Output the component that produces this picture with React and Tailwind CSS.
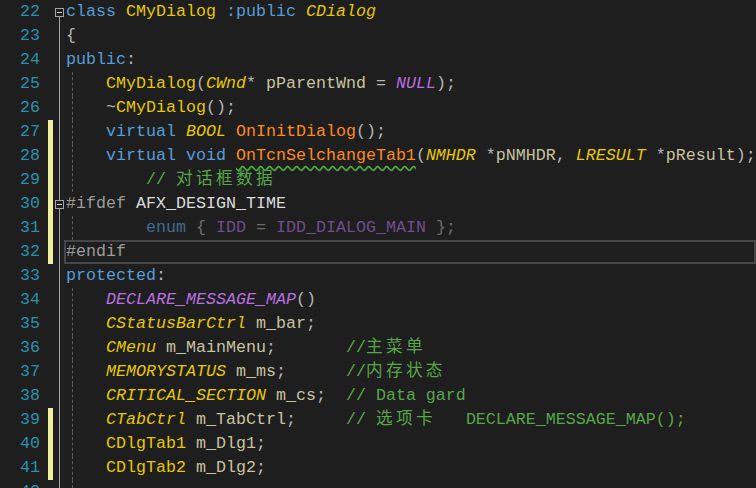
import React from 'react';

const K = 'text-[#569cd6]';
const T = 'text-[#e8c800] italic';
const C = 'text-[#e8c800]';
const F = 'text-[#ff8a1c]';
const M = 'text-[#b86fe0] italic';
const I = 'text-[#c8c3a0]';
const P = 'text-[#b4b4b4]';
const G = 'text-[#57a64a]';
const PP = 'text-[#9b9b9b]';
const W = 'text-[#dcdcdc]';
const SQ = 'text-[#ff8a1c] underline decoration-wavy decoration-[#4caa3c] underline-offset-[5px]';
const CJK = 'tracking-[3.33px]';

const lines = [
  { n: 22, box: 'first', code: [[K, 'class '], [C, 'CMyDialog '], [K, ':public '], [T, 'CDialog']] },
  { n: 23, code: [[P, '{']] },
  { n: 24, code: [[K, 'public'], [P, ':']] },
  { n: 25, guide: true, code: [[C, 'CMyDialog'], [P, '('], [T, 'CWnd'], [P, '* '], [I, 'pParentWnd '], [P, '= '], [M, 'NULL'], [P, ');']] },
  { n: 26, guide: true, code: [[P, '~'], [C, 'CMyDialog'], [P, '();']] },
  { n: 27, guide: true, mark: true, code: [[K, 'virtual '], [T, 'BOOL '], [F, 'OnInitDialog'], [P, '();']] },
  { n: 28, guide: true, mark: true, code: [[K, 'virtual void '], [SQ, 'OnTcnSelchangeTab1'], [P, '('], [T, 'NMHDR '], [P, '*'], [I, 'pNMHDR'], [P, ', '], [T, 'LRESULT '], [P, '*'], [I, 'pResult'], [P, ');']] },
  { n: 29, guide: true, extra: true, mark: true, code: [[G, '// '], [G + ' ' + CJK, '对话框数据']] },
  { n: 30, box: 'mid', mark: true, code: [[PP, '#ifdef '], [W, 'AFX_DESIGN_TIME']] },
  { n: 31, guide: true, extra: true, mark: true, code: [['text-[#3f6c92]', 'enum '], ['text-[#6c6c6c]', '{ '], ['text-[#6e4f8c]', 'IDD '], ['text-[#6c6c6c]', '= '], ['text-[#6e4f8c]', 'IDD_DIALOG_MAIN '], ['text-[#6c6c6c]', '};']] },
  { n: 32, current: true, mark: true, code: [[PP, '#endif']] },
  { n: 33, code: [[K, 'protected'], [P, ':']] },
  { n: 34, guide: true, code: [[M, 'DECLARE_MESSAGE_MAP'], [P, '()']] },
  { n: 35, guide: true, code: [[T, 'CStatusBarCtrl '], [I, 'm_bar'], [P, ';']] },
  { n: 36, guide: true, code: [[T, 'CMenu '], [I, 'm_MainMenu'], [P, ';       '], [G, '//'], [G + ' ' + CJK, '主菜单']] },
  { n: 37, guide: true, code: [[T, 'MEMORYSTATUS '], [I, 'm_ms'], [P, ';      '], [G, '//'], [G + ' ' + CJK, '内存状态']] },
  { n: 38, guide: true, code: [[T, 'CRITICAL_SECTION '], [I, 'm_cs'], [P, ';  '], [G, '// Data gard']] },
  { n: 39, guide: true, mark: true, code: [[T, 'CTabCtrl '], [I, 'm_TabCtrl'], [P, ';     '], [G, '// '], [G + ' ' + CJK, '选项卡'], [G, '   DECLARE_MESSAGE_MAP();']] },
  { n: 40, guide: true, mark: true, code: [[C, 'CDlgTab1 '], [I, 'm_Dlg1'], [P, ';']] },
  { n: 41, guide: true, mark: true, code: [[C, 'CDlgTab2 '], [I, 'm_Dlg2'], [P, ';']] },
  { n: 42, guide: true, code: [] },
];

function Outline({ box }) {
  if (!box) {
    return (
      <div className="w-[13px] shrink-0 h-full flex justify-center">
        <div className="w-px h-full bg-[#a5a5a5]" />
      </div>
    );
  }
  return (
    <div className="w-[13px] shrink-0 h-full flex flex-col items-center">
      <div className={`w-px h-[8px] ${box === 'mid' ? 'bg-[#a5a5a5]' : ''}`} />
      <div className="w-[9px] h-[9px] border border-[#a5a5a5] flex items-center justify-center shrink-0">
        <div className="w-[5px] h-px bg-[#d0d0d0]" />
      </div>
      <div className="w-px flex-1 bg-[#a5a5a5]" />
    </div>
  );
}

function Line({ line }) {
  return (
    <div className="flex h-[24px] leading-[24px]">
      <div className="w-[40px] shrink-0 text-right text-[#2b91af]">{line.n}</div>
      <div className="w-[8px] shrink-0" />
      <div className={`w-[5px] shrink-0 h-full ${line.mark ? 'bg-[#efef9f]' : ''}`} />
      <Outline box={line.box} />
      <div
        className={`flex-1 flex h-full whitespace-pre ${
          line.current ? 'border-2 border-[#464646] -ml-[2px] leading-[20px]' : ''
        }`}
      >
        {line.guide && (
          <div className="w-[40px] h-full shrink-0 pl-[6px]">
            <div className="h-full border-l border-dashed border-[#5c5c5c]" />
          </div>
        )}
        {line.extra && <span>{'    '}</span>}
        {line.code.map(([cls, text], i) => (
          <span key={i} className={cls}>
            {text}
          </span>
        ))}
      </div>
    </div>
  );
}

export default function App() {
  return (
    <div
      className="w-[756px] h-[488px] overflow-hidden bg-[#1e1e1e] text-[16.667px] text-[#dcdcdc]"
      style={{ fontFamily: '"Liberation Mono", "Noto Sans CJK SC", monospace' }}
    >
      {lines.map((line) => (
        <Line key={line.n} line={line} />
      ))}
    </div>
  );
}
